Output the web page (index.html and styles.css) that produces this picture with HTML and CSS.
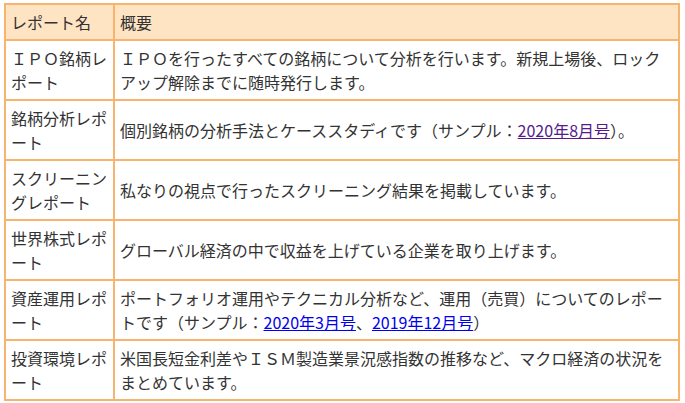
FILE: index.html
```html
<!DOCTYPE html>
<html lang="ja">
<head>
<meta charset="utf-8">
<title>レポート一覧</title>
<link rel="stylesheet" href="styles.css">
</head>
<body>
<table class="reports">
  <colgroup>
    <col class="col-name">
    <col class="col-desc">
  </colgroup>
  <thead>
    <tr><th>レポート名</th><th>概要</th></tr>
  </thead>
  <tbody>
    <tr><td>ＩＰＯ銘柄レポート</td><td>ＩＰＯを行ったすべての銘柄について分析を行います。新規上場後、ロックアップ解除までに随時発行します。</td></tr>
    <tr><td>銘柄分析レポート</td><td>個別銘柄の分析手法とケーススタディです（サンプル：<a class="visited" href="#">2020年8月号</a>）。</td></tr>
    <tr><td>スクリーニングレポート</td><td>私なりの視点で行ったスクリーニング結果を掲載しています。</td></tr>
    <tr><td>世界株式レポート</td><td>グローバル経済の中で収益を上げている企業を取り上げます。</td></tr>
    <tr><td>資産運用レポート</td><td>ポートフォリオ運用やテクニカル分析など、運用（売買）についてのレポートです（サンプル：<a class="link" href="#">2020年3月号</a>、<a class="link" href="#">2019年12月号</a>）</td></tr>
    <tr><td>投資環境レポート</td><td>米国長短金利差やＩＳＭ製造業景況感指数の推移など、マクロ経済の状況をまとめています。</td></tr>
  </tbody>
</table>
</body>
</html>
```
FILE: styles.css
```css
html, body {
  margin: 0;
  padding: 0;
  background: #ffffff;
}
body {
  padding: 3px 0 0 4px;
  font-family: "Noto Sans CJK JP", "Noto Sans", sans-serif;
  font-size: 16px;
  line-height: 24px;
  color: #333333;
}
.reports {
  width: 676px;
  table-layout: fixed;
  border-collapse: separate;
  border-spacing: 0;
  border-top: 2px solid #f8b46e;
  border-left: 2px solid #f8b46e;
}
.col-name { width: 109px; }
.col-desc { width: 565px; }
.reports th,
.reports td {
  padding: 5px 5px;
  border-right: 2px solid #f8b46e;
  border-bottom: 2px solid #f8b46e;
  text-align: left;
  vertical-align: middle;
  font-weight: normal;
}
.reports thead th {
  background: #ffe4c4;
}
.reports a {
  text-decoration: underline;
}
.reports a.visited { color: #551a8b; }
.reports a.link { color: #0000ee; }
```
